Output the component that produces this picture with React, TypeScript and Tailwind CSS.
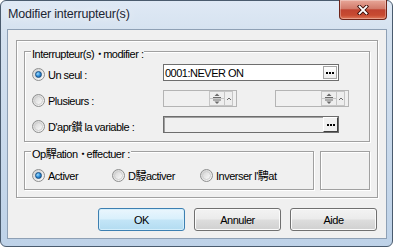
import React from 'react';

interface RadioProps {
  checked?: boolean;
}

const Radio: React.FC<RadioProps> = ({ checked }) => (
  <span className="flex h-[13px] w-[13px] shrink-0 items-center justify-center rounded-full border border-[#8e8f8f] bg-[linear-gradient(135deg,#d0d0d0,#fbfbfb)]">
    {checked ? (
      <span className="h-[7px] w-[7px] rounded-full border border-[#1a4f82] bg-[radial-gradient(circle_at_35%_35%,#9fdcfc_0%,#2c8ddb_50%,#0c4d8c_100%)]" />
    ) : (
      <span className="h-[9px] w-[9px] rounded-full border border-[#cfcfcf] bg-[linear-gradient(135deg,#d6d6d6,#fafafa)]" />
    )}
  </span>
);

// the little "..." browse button inside a field
const Dots = () => (
  <span className="flex items-center gap-[1px]">
    <span className="h-[2px] w-[2px] bg-black" />
    <span className="h-[2px] w-[2px] bg-black" />
    <span className="h-[2px] w-[2px] bg-black" />
  </span>
);

const Spin = () => (
  <div className="flex h-[15px]">
    <div className="w-[16px] border border-[#c6c6c6] bg-[#eeeeee]">
      <svg viewBox="0 0 14 13" className="h-[13px] w-[14px]">
        <polygon points="7,1.5 4.5,4 9.5,4" fill="#6a6a6a" />
        <rect x="3" y="5" width="8" height="1" fill="#6a6a6a" />
        <rect x="0" y="6" width="14" height="1" fill="#c6c6c6" />
        <rect x="3" y="7.5" width="8" height="1" fill="#6a6a6a" />
        <polygon points="4.5,9.5 9.5,9.5 7,12" fill="#6a6a6a" />
      </svg>
    </div>
    <div className="flex w-[8px] items-center justify-center border border-l-0 border-[#c6c6c6] bg-[#eeeeee]">
      <svg viewBox="0 0 6 6" className="h-[6px] w-[6px]">
        <path d="M1 4 L3 2 L5 4" fill="none" stroke="#6a6a6a" strokeWidth="1" />
      </svg>
    </div>
  </div>
);

interface ButtonProps {
  label: string;
  primary?: boolean;
}

const DialogButton: React.FC<ButtonProps> = ({ label, primary }) => (
  <button
    className={
      primary
        ? 'h-[23px] w-[87px] rounded-[3px] border border-[#3c7fb1] bg-[linear-gradient(180deg,#eaf6fd_0%,#d9f0fc_48%,#c3e5f7_52%,#b3dcf1_100%)] shadow-[inset_0_0_0_1px_#d4eefb]'
        : 'h-[23px] w-[87px] rounded-[3px] border border-[#707070] bg-[linear-gradient(180deg,#f3f3f3_0%,#ebebeb_48%,#dddddd_52%,#d0d0d0_100%)] shadow-[inset_0_0_0_1px_#fbfbfb]'
    }
  >
    {label}
  </button>
);

export default function App() {
  return (
    <div className="h-[247px] w-[393px] overflow-hidden bg-white">
      <div className="flex h-full w-full flex-col rounded-[6px] border border-[#4a5b6e] bg-[linear-gradient(180deg,#dfe9f5_0%,#d4e1ef_14%,#bed2e8_100%)] font-['Liberation_Sans','Noto_Sans_CJK_JP',sans-serif] text-[11px] leading-[12px] tracking-[-0.5px] text-black">
        {/* Title bar */}
        <div className="flex h-[28px] shrink-0 items-start">
          <div className="flex-1 pl-[7px] pt-[5px] text-[12.5px] leading-[16px] tracking-[-0.2px] text-[#1b2533] [text-shadow:0_0_8px_rgba(255,255,255,0.95)]">
            Modifier interrupteur(s)
          </div>
          <button className="-mt-px mr-[5px] flex h-[20px] w-[48px] items-center justify-center rounded-b-[4px] border border-t-0 border-[#6e2419] bg-[linear-gradient(180deg,#e8a799_0%,#d27b6b_45%,#c04330_52%,#c74a31_80%,#e07a5c_100%)] shadow-[inset_0_0_0_1px_rgba(255,255,255,0.3)]">
            <svg viewBox="0 0 12 10" className="h-[10px] w-[12px]">
              <path d="M2.5 1.5 L9.5 8.5 M9.5 1.5 L2.5 8.5" stroke="#3a0d07" strokeWidth="3.6" strokeLinecap="square" />
              <path d="M2.5 1.5 L9.5 8.5 M9.5 1.5 L2.5 8.5" stroke="#ffffff" strokeWidth="1.8" strokeLinecap="square" />
            </svg>
          </button>
        </div>

        {/* Client area */}
        <div className="mb-[7px] ml-[6px] mr-[5px] flex flex-1 flex-col border border-[#8ea0b5] bg-[#f0f0f0]">
          {/* Etched panel */}
          <div className="mx-[8px] mt-[10px] flex h-[158px] flex-col border border-[#a0a0a0] px-[7px] pt-[10px] shadow-[inset_1px_1px_0_#fff,1px_1px_0_#fff]">
            {/* Interrupteur(s) à modifier */}
            <div className="relative flex h-[91px] flex-col gap-[9px] border border-[#a0a0a0] pl-[7px] pt-[12px] shadow-[inset_1px_1px_0_#fff,1px_1px_0_#fff]">
              <span className="absolute -top-[4px] left-[6px] bg-[#f0f0f0] px-px">
                Interrupteur(s)<span className="tracking-[-2px]">・</span>modifier :
              </span>

              <div className="flex h-[17px] items-center">
                <label className="mt-[4px] flex w-[131px] items-center gap-[3px]">
                  <Radio checked />
                  <span>Un seul :</span>
                </label>
                <div className="flex h-[17px] w-[176px] items-center justify-between border border-[#6e6e6e] bg-white pl-px pr-px">
                  <span>0001:NEVER ON</span>
                  <span className="flex h-[13px] w-[14px] items-center justify-center border border-[#a5a5a5] bg-[linear-gradient(180deg,#ffffff,#ececec)]">
                    <Dots />
                  </span>
                </div>
              </div>

              <div className="flex h-[17px] items-center">
                <label className="mt-[4px] flex w-[131px] items-center gap-[3px]">
                  <Radio />
                  <span>Plusieurs :</span>
                </label>
                <div className="flex h-[17px] w-[74px] items-center justify-end border border-[#b4b4b4] bg-[#f0f0f0] pr-[3px]">
                  <Spin />
                </div>
                <div className="ml-[38px] flex h-[17px] w-[74px] items-center justify-end border border-[#b4b4b4] bg-[#f0f0f0] pr-[3px]">
                  <Spin />
                </div>
              </div>

              <div className="flex h-[17px] items-center">
                <label className="mt-[4px] flex w-[131px] items-center gap-[3px]">
                  <Radio />
                  <span>D'apr鑚 la variable :</span>
                </label>
                <div className="flex h-[17px] w-[176px] items-center justify-end border border-[#6d6d6d] bg-[#f0f0f0] shadow-[inset_1px_1px_0_#a0a0a0]">
                  <span className="flex h-[15px] w-[15px] items-center justify-center border border-white border-b-[#404040] border-r-[#404040] bg-[#f0f0f0]">
                    <Dots />
                  </span>
                </div>
              </div>
            </div>

            {/* Opération à effectuer */}
            <div className="mt-[9px] flex h-[39px] gap-[6px]">
              <div className="relative flex w-[290px] items-start border border-[#a0a0a0] pl-[7px] pt-[17px] shadow-[inset_1px_1px_0_#fff,1px_1px_0_#fff]">
                <span className="absolute -top-[4px] left-[6px] bg-[#f0f0f0] px-px">
                  Op駻ation<span className="tracking-[-2px]">・</span>effectuer :
                </span>
                <label className="flex w-[80px] items-center gap-[3px]">
                  <Radio checked />
                  <span>Activer</span>
                </label>
                <label className="flex w-[88px] items-center gap-[3px]">
                  <Radio />
                  <span>D駸activer</span>
                </label>
                <label className="flex items-center gap-[3px]">
                  <Radio />
                  <span>Inverser l'騁at</span>
                </label>
              </div>
              <div className="flex-1 border border-[#a0a0a0] shadow-[inset_1px_1px_0_#fff,1px_1px_0_#fff]" />
            </div>
          </div>

          {/* Buttons */}
          <div className="mt-[10px] flex justify-end gap-[9px] pr-[9px]">
            <DialogButton label="OK" primary />
            <DialogButton label="Annuler" />
            <DialogButton label="Aide" />
          </div>
        </div>
      </div>
    </div>
  );
}
